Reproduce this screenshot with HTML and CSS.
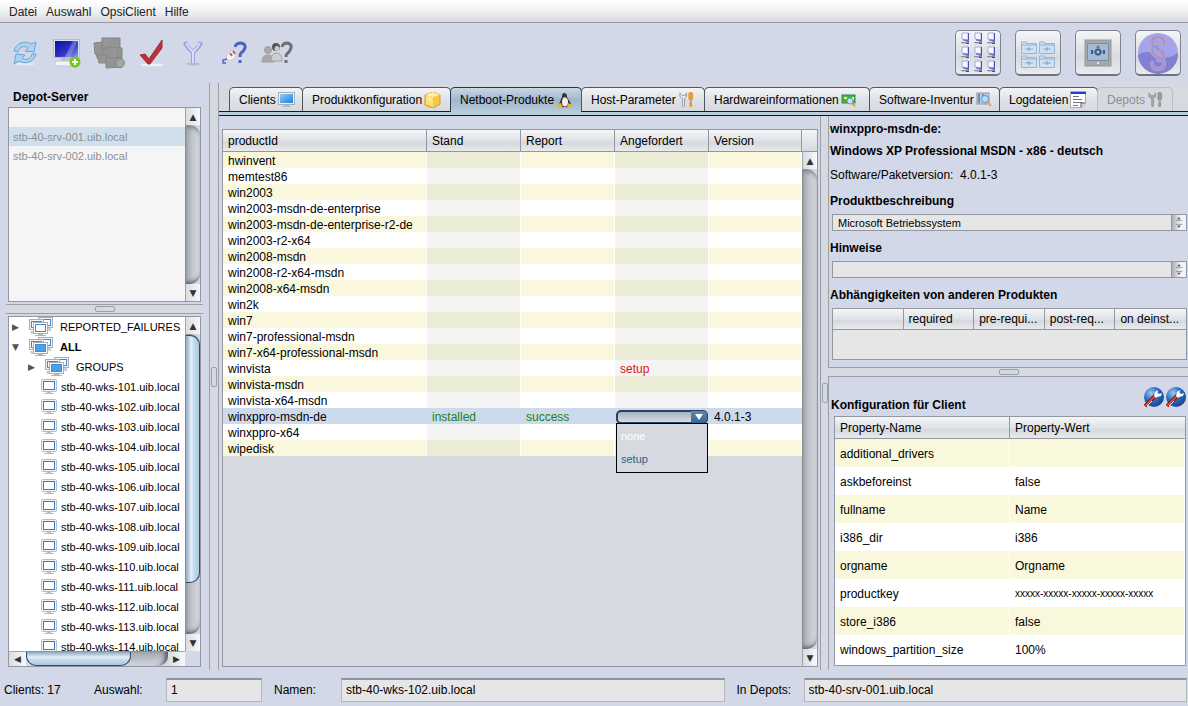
FILE: index.html
```html
<!DOCTYPE html>
<html lang="de">
<head>
  <meta charset="UTF-8">
  <meta name="viewport" content="width=device-width, initial-scale=1.0">
  <title>opsi config editor</title>
  <link rel="stylesheet" href="styles.css">
</head>
<body>

  <!-- shared icons -->
  <svg class="defs" width="0" height="0" aria-hidden="true">
    <defs>
      <linearGradient id="gBlue" x1="0" y1="0" x2="1" y2="1">
        <stop offset="0" stop-color="#8fd0fb"/><stop offset="1" stop-color="#1c7fe0"/>
      </linearGradient>
      <linearGradient id="gNavy" x1="0" y1="0" x2="1" y2="1">
        <stop offset="0" stop-color="#0a10a0"/><stop offset=".6" stop-color="#3038c8"/><stop offset="1" stop-color="#8f9cf0"/>
      </linearGradient>
      <radialGradient id="gBall" cx=".35" cy=".3" r=".8">
        <stop offset="0" stop-color="#9cc8f4"/><stop offset=".45" stop-color="#2f6fc0"/><stop offset="1" stop-color="#103c88"/>
      </radialGradient>
    </defs>
    <symbol id="pc" viewBox="0 0 16 16">
      <path d="M6 12h4v2h3v1H3v-1h3z" fill="#b8bcc2"/>
      <rect x=".5" y=".5" width="15" height="12" rx="1" fill="#f1f2f4" stroke="#b8bcc0"/>
      <rect x="2.500" y="2.500" width="11" height="8" fill="#fff" stroke="#2f7cc8"/>
    </symbol>
    <symbol id="group" viewBox="0 0 24 20">
      <rect x="9.500" y=".5" width="14" height="10" fill="#f2f4f6" stroke="#a9aeb4"/>
      <rect x="11.500" y="2.500" width="10" height="6" fill="#fff" stroke="#3c8ad4"/>
      <path d="M19 11h3v3h-3z" fill="#ccd0d4"/>
      <rect x=".5" y="2.500" width="14" height="10" fill="#f2f4f6" stroke="#a9aeb4"/>
      <rect x="2.500" y="4.500" width="10" height="6" fill="#fff" stroke="#3c8ad4"/>
      <path d="M1 14h4v3H2z" fill="#ccd0d4"/>
      <path d="M9 16h5v2h3v1H6v-1h3z" fill="#b0b5ba"/>
      <rect x="4.500" y="5.500" width="14" height="11" fill="#fff" stroke="#a9aeb4"/>
      <rect x="6.500" y="7.500" width="10" height="7" stroke="#3c8ad4"/>
    </symbol>
    <symbol id="minipc" viewBox="0 0 11 13">
      <path d="M2 1h6v7l-6-1z" fill="#f8f8ff" stroke="#a3a8e4"/>
      <path d="M8.500 1v7.500L3 8" fill="none" stroke="#4850c0"/>
      <path d="M5 10l4-1v1z" fill="#4850c0"/>
      <path d="M1 10.500h8" stroke="#8a8ca0"/><path d="M2 11.500h5" stroke="#e8c46a"/><path d="M6 11.500h3" stroke="#444c98"/>
    </symbol>
    <symbol id="folder" viewBox="0 0 16 13">
      <path d="M.5 12.500V1h5v1.500h10v10z" fill="#cfe0f1" stroke="#8db8e0"/>
      <path d="M.5 4h15M4 8h8M8 6v4" fill="none" stroke="#8fb0d4"/><circle cx="8" cy="8" r="1.500" fill="#8fb0d4"/>
    </symbol>
    <symbol id="tool" viewBox="0 0 22 22">
      <circle cx="11" cy="11" r="10" fill="url(#gBall)"/>
      <path d="M2 20L13 9" stroke="#5b1014" stroke-width="3.500"/><path d="M2 20L13 9" stroke="#f04038" stroke-width="2"/>
      <path d="M4 20l5-5" stroke="#e8eef4"/>
      <path d="M11 10l1-4 3-2-.5 3 2 1 2.500-1-1 3-4 1-1 1z" fill="#fff"/>
    </symbol>
    <symbol id="wrenches" viewBox="0 0 18 18">
      <path d="M2 2v4l3 2v8q1 2 2 0V8l2-2V2L7.500 5h-3z" fill="var(--a)" stroke="var(--b)"/>
      <rect x="11" y="1" width="5" height="9" rx="2" fill="var(--c)"/><path d="M13.500 10v3" stroke="var(--b)" stroke-width="2"/><rect x="12" y="12" width="3" height="5" rx="1" fill="var(--c)"/>
    </symbol>
    <symbol id="spin" viewBox="0 0 15 15">
      <path d="M4 5.500h7M4 9.500h7" stroke="#8d9299"/><path d="M5.500 4L7.500 2l2 2zM5.500 11l2 2 2-2z" fill="#4a4e55"/>
    </symbol>
  </svg>

  <nav class="menubar">
    <a href="#">Datei</a>
    <a href="#">Auswahl</a>
    <a href="#">OpsiClient</a>
    <a href="#">Hilfe</a>
  </nav>

  <div class="toolbar">
    <div class="tools">
      <button aria-label="Neu laden">
        <svg width="28" height="28" viewBox="0 0 28 28">
          <ellipse cx="14" cy="25" rx="10" ry="1.500" fill="#e6eaf3"/>
          <g fill="#a9d3f0" stroke="#6aa6d2"><path d="M3 12C5 4 14 1 20 5l5-2-2 10-9-1 3-3C13 6 8 8 7 13z"/><path d="M25 15c-2 8-11 11-17 7l-5 3 2-10 9 1-3 3c4 3 9 1 10-4z"/></g>
        </svg>
      </button>
      <button aria-label="Neuer Client">
        <svg width="28" height="30" viewBox="0 0 28 30">
          <rect x=".5" y="1.500" width="26" height="18" fill="#dde2f8" stroke="#b4bad8"/><rect x="2" y="3" width="23" height="16" fill="url(#gNavy)"/><path d="M20 3h5L17 19h-5z" fill="#fff" opacity=".25"/>
          <path d="M8 20h10v3H8z" fill="#bbc0c8"/><path d="M3 23h19l4 5H1z" fill="#f4f4f6" stroke="#c0c4cc"/>
          <circle cx="22" cy="24" r="5.500" fill="#78c420"/><path d="M22 21v6M19 24h6" stroke="#fff" stroke-width="2"/>
        </svg>
      </button>
      <button aria-label="Gruppe">
        <svg width="32" height="32" viewBox="0 0 32 32">
          <g fill="#949494" stroke="#858585"><path d="M1 6l9-1 1 11-1 5H4v-3l-2-1z"/><path d="M9 1h18v12H9z"/><path d="M12 10l17 1v12H12z"/><path d="M4 18h10v8H6z"/><path d="M13 21l15-1 1 10-16 1z"/></g>
          <circle cx="27" cy="26" r="4.500" fill="#a5a5a5" stroke="#848484"/><path d="M13 2v7M21 12v8" stroke="#a0a0a0"/>
        </svg>
      </button>
      <button aria-label="Speichern">
        <svg width="28" height="28" viewBox="0 0 28 28">
          <ellipse cx="15" cy="26" rx="12" ry="1.500" fill="#edf0f7"/>
          <path d="M3 16l5-1 4 5L25 1v8L13 25h-2z" fill="#bd3038" stroke="#993038"/>
        </svg>
      </button>
      <button aria-label="Filter">
        <svg width="20" height="26" viewBox="0 0 20 26">
          <ellipse cx="10" cy="24" rx="7" ry="1.500" fill="#b5badb"/>
          <path d="M2 2q2 6 8 10 6-4 8-10M10 12v11" fill="none" stroke="#9a9fe0" stroke-width="4"/><path d="M3 3q2 5 7 9 5-4 7-9M10 12v11" fill="none" stroke="#dcdefb" stroke-width="2"/>
        </svg>
      </button>
      <button aria-label="Auswahl definieren">
        <svg width="26" height="24" viewBox="0 0 26 24">
          <path d="M13 6q1-4 6-4 5 1 4 5-1 3-4 5-1 1-1 4M18 19v3" fill="none" stroke="#4f60bd" stroke-width="3"/>
          <path d="M4 18q0-7 7-9l4 3-3 6q-4 3-8 0z" fill="#f5f5f8" stroke="#c4c6d2"/><path d="M8 12l2 3M11 10l2 3" stroke="#c85450" stroke-width="2"/><path d="M5 18l-4 1v3h3" fill="none" stroke="#5666bc" stroke-width="1.500"/>
        </svg>
      </button>
      <button aria-label="Clients suchen">
        <svg width="32" height="24" viewBox="0 0 32 24">
          <g fill="#a9a9a9" stroke="#a0a0a0"><circle cx="7" cy="9" r="3.500"/><path d="M1 21q0-7 6-7t6 7z"/><path d="M10 20q0-8 5-8 6 0 6 8z" fill="#cfcfcf"/></g>
          <circle cx="15" cy="6" r="4" fill="#545454"/><circle cx="16" cy="7.500" r="2.500" fill="#ccc"/>
          <path d="M21 6q1-4 5-4 5 1 4 5-1 3-3 5-2 1-2 4M25 19v3" fill="none" stroke="#707070" stroke-width="3"/>
        </svg>
      </button>
    </div>

    <div class="modes">
      <button aria-label="Clients">
        <svg width="38" height="42" viewBox="0 0 38 42">
          <use href="#minipc" x="1" y="0" width="11" height="13"/><use href="#minipc" x="14" y="0" width="11" height="13"/><use href="#minipc" x="27" y="0" width="11" height="13"/>
          <use href="#minipc" x="1" y="14" width="11" height="13"/><use href="#minipc" x="14" y="14" width="11" height="13"/><use href="#minipc" x="27" y="14" width="11" height="13"/>
          <use href="#minipc" x="1" y="28" width="11" height="13"/><use href="#minipc" x="14" y="28" width="11" height="13"/><use href="#minipc" x="27" y="28" width="11" height="13"/>
        </svg>
      </button>
      <button aria-label="Depots">
        <svg class="low" width="36" height="28" viewBox="0 0 36 28">
          <use href="#folder" x="1" y="0" width="16" height="13"/><use href="#folder" x="19" y="0" width="16" height="13"/>
          <use href="#folder" x="1" y="14" width="16" height="13"/><use href="#folder" x="19" y="14" width="16" height="13"/>
        </svg>
      </button>
      <button aria-label="Server">
        <svg width="28" height="28" viewBox="0 0 28 28">
          <rect x="1" y="1" width="26" height="26" fill="#a5a7aa" stroke="#94979b"/><rect x="3.500" y="4.500" width="21" height="17" fill="#a3bbd3" stroke="#7e8fa2"/>
          <path d="M7 13h14M14 7v10" stroke="#6683a6"/><circle cx="14" cy="13" r="3.500" fill="#34618f"/><circle cx="14" cy="13" r="1.500" fill="#a7cbea"/>
          <path d="M8 11v4M20 11v4" stroke="#4e5688" stroke-width="2"/><circle cx="14" cy="8" r="1.500" fill="#a65c70"/><path d="M13 24h2" stroke="#e4e4e4" stroke-width="2"/>
        </svg>
      </button>
      <button aria-label="Lizenzen">
        <svg width="42" height="42" viewBox="0 0 42 42">
          <circle cx="21" cy="21" r="20" fill="#a3a4ec"/><path d="M1 23q9-6 17 0 11 6 23-2a20 20 0 0 1-40 2z" fill="#8080d4"/>
          <g fill="none" stroke-linecap="round">
            <path id="para" d="M27 11q0-6-6-6t-6 5q0 4 6 7 6 3 6 7t-6 4M15 31q0 6 6 6t6-5q0-4-6-7-6-3-6-7t6-4" stroke="#cf9fb0" stroke-width="4"/>
            <path d="M27 11q0-6-6-6t-6 5q0 4 6 7 6 3 6 7t-6 4M15 31q0 6 6 6t6-5q0-4-6-7-6-3-6-7t6-4" stroke="#9494e2" stroke-width="2"/>
          </g>
        </svg>
      </button>
    </div>
  </div>

  <div class="main">
    <aside class="sidebar">
      <h2>Depot-Server</h2>
      <div class="pane depots">
        <ul class="depot-list">
          <li class="selected">stb-40-srv-001.uib.local</li>
          <li>stb-40-srv-002.uib.local</li>
        </ul>
        <div class="scroll"><button aria-label="Hoch">▲</button><div class="track"></div><button aria-label="Runter">▼</button></div>
      </div>
      <div class="splitter"></div>
      <div class="pane tree-pane">
        <ul class="tree" id="tree">
          <li><i>▶</i><svg class="empty" width="24" height="20"><use href="#group"/></svg>REPORTED_FAILURES</li>
          <li class="all"><i>▼</i><svg width="24" height="20"><use href="#group"/></svg>ALL</li>
          <li class="sub"><i>▶</i><svg width="24" height="20"><use href="#group"/></svg>GROUPS</li>
        </ul>
        <div class="scroll"><button aria-label="Hoch">▲</button><div class="track"><div class="thumb"></div></div><button aria-label="Runter">▼</button></div>
        <div class="scroll horizontal"><button aria-label="Links">◀</button><div class="track"><div class="thumb"></div></div><button aria-label="Rechts">▶</button></div>
      </div>
    </aside>

    <div class="divider"></div>

    <section class="content">
      <div class="tabs">
        <button>Clients<svg width="17" height="16" viewBox="0 0 17 16"><path d="M6 12h5v2h2v1H4v-1h2z" fill="#b4bac0"/><rect x=".5" y=".5" width="16" height="12" fill="#edf0f3" stroke="#a8b0b8"/><rect x="2" y="2" width="13" height="9" fill="url(#gBlue)"/></svg></button>
        <button>Produktkonfiguration<svg width="17" height="16" viewBox="0 0 17 16"><path d="M1 3l8-3 7 3v9l-7 4-8-3z" fill="#f5c84c" stroke="#d29a2c"/><path d="M1 3l8-3 7 3-7 2z" fill="#fff0a0"/><path d="M9 5v10l-7-3V4z" fill="#ffdf70"/><path d="M5 2v5l3 1" stroke="#fff6cc" fill="none"/></svg></button>
        <button class="active">Netboot-Produkte<svg width="17" height="17" viewBox="0 0 17 17"><path d="M8 1q3 0 3 4l4 7q-1 4-6 3-5 1-6-3l3-7q0-4 2-4z" fill="#303438"/><ellipse cx="9" cy="10" rx="3" ry="4.500" fill="#f4f4ec"/><path d="M7 5h3l-1 2z" fill="#eeb020"/><path d="M1 12l4-1 2 5H2zM11 15l1-4 4 2-2 3z" fill="#e8b430"/></svg></button>
        <button>Host-Parameter<svg class="wrench" width="17" height="17"><use href="#wrenches"/></svg></button>
        <button>Hardwareinformationen<svg width="17" height="14" viewBox="0 0 17 14"><rect x="1" y="2" width="13" height="8" fill="#42b438" stroke="#2d8c4c"/><path d="M3 4h3v2H3zM11 4h2v3h-2z" fill="#eef4a0"/><circle cx="9" cy="8" r="3" fill="#c2e2f4" stroke="#5b9ac4"/><path d="M11 10l3 3" stroke="#dd9948" stroke-width="2"/></svg></button>
        <button>Software-Inventur<svg width="17" height="16" viewBox="0 0 17 16"><rect x="1" y="1" width="12" height="11" fill="#c2ccd8" stroke="#8b98a8"/><path d="M3 2v9M7 2v3" stroke="#738eab" stroke-width="2"/><circle cx="9" cy="7" r="3.500" fill="#b8dcf8" stroke="#5d98cc"/><path d="M12 10l3 4" stroke="#e5a648" stroke-width="2"/></svg></button>
        <button>Logdateien<svg width="17" height="18" viewBox="0 0 17 18"><path d="M.5.5h15v12l-4 4H.5z" fill="#fff" stroke="#a8aaae"/><path d="M1 2h15" stroke="#1d42d2" stroke-width="2"/><path d="M3 5.500h6M3 8.500h9M3 11.500h9M3 14.500h5" stroke="#777"/><path d="M15 12h-4v4" fill="#ddd" stroke="#555"/></svg></button>
        <button disabled>Depots<svg class="wrench" width="17" height="17"><use href="#wrenches"/></svg></button>
      </div>
      <div class="tab-line"></div>

      <div class="work">
        <div class="products">
          <div class="pane product-pane">
            <table class="grid product-table">
              <thead>
                <tr><th>productId</th><th>Stand</th><th>Report</th><th>Angefordert</th><th>Version</th></tr>
              </thead>
              <tbody id="products"></tbody>
            </table>
            <div class="scroll-side">
              <div class="corner"></div>
              <div class="scroll"><button aria-label="Hoch">▲</button><div class="track"></div><button aria-label="Runter">▼</button></div>
            </div>
          </div>
        </div>

        <div class="divider"></div>

        <div class="details">
          <h3>winxppro-msdn-de:</h3>
          <h4>Windows XP Professional MSDN - x86 - deutsch</h4>
          <p>Software/Paketversion:&nbsp; 4.0.1-3</p>
          <label for="description">Produktbeschreibung</label>
          <div class="field"><input id="description" type="text" value="Microsoft Betriebssystem" readonly><svg class="spin" width="15" height="15"><use href="#spin"/></svg></div>
          <label for="hints">Hinweise</label>
          <div class="field"><input id="hints" type="text" readonly><svg class="spin" width="15" height="15"><use href="#spin"/></svg></div>
          <h5>Abhängigkeiten von anderen Produkten</h5>
          <div class="depends">
            <table class="grid">
              <thead><tr><th></th><th>required</th><th>pre-requi...</th><th>post-req...</th><th>on deinst...</th></tr></thead>
            </table>
          </div>
          <div class="splitter"></div>
          <div class="config-head">
            <h5>Konfiguration für Client</h5>
            <button aria-label="Zurücksetzen"><svg width="22" height="22"><use href="#tool"/></svg></button>
            <button aria-label="Löschen"><svg width="22" height="22"><use href="#tool"/></svg></button>
          </div>
          <div class="config">
            <table class="grid config-table">
              <thead><tr><th>Property-Name</th><th>Property-Wert</th></tr></thead>
              <tbody>
                <tr><td>additional_drivers</td><td></td></tr>
                <tr><td>askbeforeinst</td><td>false</td></tr>
                <tr><td>fullname</td><td>Name</td></tr>
                <tr><td>i386_dir</td><td>i386</td></tr>
                <tr><td>orgname</td><td>Orgname</td></tr>
                <tr><td>productkey</td><td class="key">xxxxx-xxxxx-xxxxx-xxxxx-xxxxx</td></tr>
                <tr><td>store_i386</td><td>false</td></tr>
                <tr><td>windows_partition_size</td><td>100%</td></tr>
              </tbody>
            </table>
          </div>
        </div>
      </div>
    </section>
  </div>

  <footer class="status">
    <span>Clients: 17</span>
    <label for="selection">Auswahl:</label>
    <input id="selection" type="text" value="1" readonly>
    <label for="names">Namen:</label>
    <input id="names" type="text" value="stb-40-wks-102.uib.local" readonly>
    <label for="indepots">In Depots:</label>
    <input id="indepots" type="text" value="stb-40-srv-001.uib.local" readonly>
  </footer>

  <script>
    const products = [
      'hwinvent', 'memtest86', 'win2003', 'win2003-msdn-de-enterprise',
      'win2003-msdn-de-enterprise-r2-de', 'win2003-r2-x64', 'win2008-msdn',
      'win2008-r2-x64-msdn', 'win2008-x64-msdn', 'win2k', 'win7',
      'win7-professional-msdn', 'win7-x64-professional-msdn', 'winvista',
      'winvista-msdn', 'winvista-x64-msdn', 'winxppro-msdn-de',
      'winxppro-x64', 'wipedisk'
    ];

    const state = {
      'winvista': { request: '<span class="request">setup</span>' },
      'winxppro-msdn-de': {
        stand: 'installed',
        report: 'success',
        version: '4.0.1-3',
        request: `<div class="combo">
          <select aria-label="Angefordert"><option></option><option>none</option><option>setup</option></select>
          <span class="arrow"></span>
          <ul class="popup"><li class="current">none</li><li>setup</li></ul>
        </div>`
      }
    };

    const body = document.getElementById('products');
    products.forEach(id => {
      const s = state[id] || {};
      const row = document.createElement('tr');
      if (s.stand) row.classList.add('selected');
      row.innerHTML = `<td>${id}</td><td class="ok">${s.stand || ''}</td>` +
        `<td class="ok">${s.report || ''}</td><td>${s.request || ''}</td><td>${s.version || ''}</td>`;
      body.appendChild(row);
    });

    const tree = document.getElementById('tree');
    for (let n = 101; n <= 114; n++) {
      const item = document.createElement('li');
      item.classList.add('client');
      item.innerHTML = `<svg width="16" height="16"><use href="#pc"/></svg>stb-40-wks-${n}.uib.local`;
      tree.appendChild(item);
    }
  </script>

</body>
</html>
```
FILE: styles.css
```css
* {
  box-sizing: border-box;
}

body {
  margin: 0;
  height: 100vh;
  display: flex;
  flex-direction: column;
  overflow: hidden;
  font-family: "Liberation Sans", Arial, sans-serif;
  font-size: 12px;
  color: #000;
  background: #d2d8e8;
}

h2, h3, h4, h5, p, ul {
  margin: 0;
  padding: 0;
  font-size: 12px;
  list-style: none;
}

button, input, select {
  font: inherit;
  color: inherit;
  margin: 0;
  padding: 0;
  border: none;
  background: none;
}

.defs {
  position: absolute;
}

/* Menu */
.menubar {
  height: 23px;
  display: flex;
  align-items: center;
  gap: 9px;
  padding: 2px 9px 0;
  background: linear-gradient(#fff, #f0f1f2 50%, #d6d9dd);
  border-bottom: 1px solid #9297a1;
}

.menubar a {
  color: #222;
  text-decoration: none;
}

/* Toolbar */
.toolbar {
  height: 60px;
  display: flex;
  justify-content: space-between;
  align-items: center;
  padding: 0 7px 0 4px;
}

.tools {
  display: flex;
}

.tools button {
  width: 42px;
  height: 42px;
  display: flex;
  align-items: center;
  justify-content: center;
}

.modes {
  display: flex;
  gap: 14px;
}

.modes button {
  width: 46px;
  height: 46px;
  display: flex;
  align-items: center;
  justify-content: center;
  border: 1px solid #80848c;
  border-bottom: 2px solid #6f737a;
  border-radius: 5px;
  background: linear-gradient(#f4f5f7, #d8dbe1 60%, #e8eaee);
}

.modes svg {
  flex: none;
}

.modes .low {
  margin-top: 5px;
}

/* Main */
.main {
  flex: 1;
  min-height: 0;
  display: flex;
}

.sidebar {
  width: 209px;
  display: flex;
  flex-direction: column;
  padding: 2px 8px 3px 8px;
}

.sidebar h2 {
  height: 22px;
  line-height: 24px;
  padding-left: 5px;
}

.pane {
  border: 1px solid #9297a1;
  background: #fff;
}

.depots {
  height: 195px;
  display: flex;
  background: #f5f5f5;
}

.depot-list {
  flex: 1;
  padding-top: 19px;
  font-size: 11px;
  color: #8e8f91;
}

.depot-list li {
  height: 19px;
  line-height: 20px;
  padding-left: 4px;
}

.depot-list .selected {
  background: #cfe0ec;
}

.splitter {
  height: 10px;
  margin: 2px -2px;
  display: flex;
  align-items: center;
  justify-content: center;
  border-top: 1px solid #9a9fac;
  border-bottom: 1px solid #9a9fac;
  background: #d6d9df;
}

.splitter::after {
  content: "";
  width: 18px;
  height: 4px;
  border: 1px solid #9a9fac;
  border-radius: 2px;
  background: #d6d9df;
}

.divider {
  width: 9px;
  flex: none;
  display: flex;
  align-items: center;
  justify-content: center;
  border-left: 1px solid #9a9fac;
  border-right: 1px solid #9a9fac;
  background: #d6d9df;
}

.main > .divider {
  width: 10px;
}

.divider::after {
  content: "";
  width: 4px;
  height: 18px;
  border: 1px solid #9a9fac;
  border-radius: 2px;
  background: #d6d9df;
}

.tree-pane {
  flex: 1;
  min-height: 0;
  display: grid;
  grid-template-columns: 1fr 15px;
  grid-template-rows: 1fr 15px;
  background: #d2d8e8;
}

.tree {
  min-height: 0;
  overflow: hidden;
  background: #fff;
  font-size: 11px;
}

.tree li {
  height: 20px;
  display: flex;
  align-items: center;
  white-space: nowrap;
}

.tree i {
  width: 20px;
  padding-left: 3px;
  font: 9px "DejaVu Sans", sans-serif;
  color: #555;
}

.tree svg {
  margin-right: 7px;
  fill: #4ca0ea;
}

.tree .empty {
  fill: #fff;
}

.tree .all {
  font-weight: bold;
}

.tree .sub {
  padding-left: 16px;
}

.tree .client {
  padding-left: 32px;
}

.tree .client svg {
  margin-right: 4px;
}

/* Scrollbars */
.scroll {
  width: 15px;
  min-height: 0;
  display: flex;
  flex-direction: column;
  background: #d6d9df;
}

.scroll button {
  height: 17px;
  flex: none;
  font: 9px "DejaVu Sans", sans-serif;
  color: #333;
  border-left: 1px solid #a0a5ad;
  background: linear-gradient(90deg, #d9dce1, #f8f8f9);
}

.scroll .track {
  flex: 1;
  min-height: 0;
  border-left: 1px solid #888d96;
  border-top: 1px solid #8d929a;
  border-radius: 0 10px 10px 0;
  background: linear-gradient(90deg, #a3a7af, #c4c8cf 50%, #d5d8dd);
  box-shadow: inset 0 4px 4px -2px #7f848c, inset 0 -5px 4px -3px #555a62;
}

.scroll .thumb {
  height: 83%;
  border: 1px solid #304a66;
  border-left: none;
  border-radius: 0 10px 10px 0;
  background: linear-gradient(90deg, #8fa9c0, #e4eff8 40%, #c5dced 60%, #a7c9df);
}

.scroll.horizontal {
  width: auto;
  flex-direction: row;
}

.horizontal button {
  width: 17px;
  height: 15px;
  border: none;
  border-top: 1px solid #a0a5ad;
}

.horizontal .track {
  border-left: none;
  border-radius: 0 0 10px 10px;
  background: linear-gradient(#a3a7af, #d5d8dd);
  box-shadow: inset -6px 0 4px -3px #555a62;
}

.horizontal .thumb {
  width: 74%;
  height: 100%;
  border: 1px solid #304a66;
  border-top: none;
  border-radius: 0 0 10px 10px;
  background: linear-gradient(#8fa9c0, #e4eff8 40%, #c5dced 60%, #a7c9df);
}

/* Tabs */
.content {
  flex: 1;
  min-width: 0;
  display: flex;
  flex-direction: column;
}

.tabs {
  height: 29px;
  display: grid;
  grid-template-columns: 73px 148px 131px 123px 165px 130px 98px 75px;
  padding: 4px 0 0 10px;
  background: #d6d9df;
  border-bottom: 1px solid #10192c;
}

.tabs button {
  height: 24px;
  display: flex;
  align-items: center;
  padding-left: 9px;
  white-space: nowrap;
  border: 1px solid #50555f;
  border-bottom: none;
  border-radius: 5px 5px 0 0;
  margin-right: -1px;
  background: linear-gradient(#f3f4f6, #dfe2e7 50%, #d6d9df);
}

.tabs button.active {
  height: 25px;
  border-color: #24364e;
  background: linear-gradient(#cbd8e4, #a1b6ca 50%, #b7cbdc);
}

.tabs button:disabled {
  color: #8e8f91;
  border-color: #b8bcc4;
  background: #d6d9df;
}

.tabs svg {
  flex: none;
  margin-left: 2px;
}

.wrench {
  --a: #f0f1f2;
  --b: #94989c;
  --c: #ef9738;
}

.tabs button:disabled .wrench {
  --a: #a5a7aa;
  --b: #999;
  --c: #999;
}

.tab-line {
  height: 4px;
  background: #b9cddd;
  border-bottom: 1px solid #10192c;
}

.work {
  flex: 1;
  min-height: 0;
  display: flex;
}

.products {
  flex: 1;
  min-width: 0;
  display: flex;
  padding: 13px 2px 3px 3px;
}

.product-pane {
  flex: 1;
  min-width: 0;
  display: flex;
  align-items: flex-start;
  background: #d6d9df;
}

.scroll-side {
  align-self: stretch;
  display: flex;
  flex-direction: column;
}

.scroll-side .corner {
  height: 22px;
  background: linear-gradient(#f4f5f6, #d5d8dd);
  border-bottom: 1px solid #9297a1;
}

.scroll-side .scroll {
  flex: 1;
}

/* Tables */
.grid {
  flex: 1;
  width: 100%;
  min-width: 0;
  table-layout: fixed;
  border-collapse: separate;
  border-spacing: 0;
}

.grid th {
  height: 21px;
  padding: 0 5px;
  text-align: left;
  font-weight: normal;
  white-space: nowrap;
  border-right: 1px solid #9297a1;
  border-bottom: 1px solid #9297a1;
  background: linear-gradient(#f4f5f6, #dfe2e6 50%, #d5d8dd 60%, #e8eaed);
}

.grid td {
  height: 16px;
  padding: 0 5px;
  line-height: 14px;
  white-space: nowrap;
  border-right: 1px solid #fff;
  background: #fff;
}

.grid tr:nth-child(odd) td {
  background: #f9f8dc;
}

.product-table th {
  height: 22px;
}

.product-table td {
  padding-top: 1px;
}

.product-table th:not(:first-child) {
  width: 94px;
}

.product-table th:last-child:last-child {
  width: 93px;
}

.product-table td:nth-child(2),
.product-table td:nth-child(4) {
  background: #f4f4f4;
}

.product-table tr:nth-child(odd) td:nth-child(2),
.product-table tr:nth-child(odd) td:nth-child(4) {
  background: #ecebd6;
}

.product-table tr.selected td:nth-child(n) {
  background: #cddaec;
  border-color: #cddaec;
}

.grid .ok {
  color: #1c8024;
}

.request {
  color: #e01020;
}

.combo {
  position: relative;
  height: 14px;
  margin: 0 -5px 0 -4px;
}

.combo select {
  display: block;
  width: 100%;
  height: 14px;
  appearance: none;
  border: 2px solid #28425e;
  border-radius: 5px;
  background: linear-gradient(#a6b1bf, #d9dde3);
}

/* drop-down button and list lie over the cell */
.arrow {
  position: absolute;
  top: 1px;
  right: 1px;
  width: 16px;
  height: 12px;
  border-radius: 0 4px 4px 0;
  background: linear-gradient(#6289ae, #386590);
  pointer-events: none;
}

.arrow::after {
  content: "";
  display: block;
  margin: 3px 4px;
  border: 4px solid transparent;
  border-top: 6px solid #fff;
  border-bottom: none;
}

.popup {
  position: absolute;
  top: 13px;
  left: 0;
  width: 100%;
  height: 50px;
  border: 1px solid #000;
  background: #d6d9df;
  z-index: 2;
  font-size: 11px;
}

.popup li {
  height: 23px;
  line-height: 25px;
  padding-left: 4px;
  color: #2f6188;
}

.popup .current {
  color: #fff;
}

/* Details */
.details {
  width: 359px;
  flex: none;
  display: flex;
  flex-direction: column;
  padding: 1px 1px 4px 1px;
}

.details h3 {
  line-height: 24px;
}

.details h4 {
  line-height: 20px;
}

.details p {
  line-height: 28px;
}

.details label, .details h5 {
  font-weight: bold;
  line-height: 24px;
}

.field {
  height: 17px;
  display: flex;
  margin: 1px 0 5px 2px;
  border: 1px solid #9297a1;
  background: #e6e6e6;
}

.field input {
  flex: 1;
  min-width: 0;
  padding-left: 5px;
  font-size: 11px;
}

.spin {
  border-left: 1px solid #9297a1;
  background: linear-gradient(90deg, #aaafb6, #f2f3f4 60%);
}

.depends {
  height: 52px;
  margin: 1px 0 5px 2px;
  border: 1px solid #9297a1;
  background: #e6e6e6;
}

.depends th:last-child, .config-table th:last-child {
  border-right: none;
}

.details .splitter {
  margin-bottom: 0;
}

.config-head {
  height: 39px;
  display: flex;
  align-items: center;
  padding-left: 1px;
}

.config-head h5 {
  flex: 1;
  padding-top: 16px;
}

.config-head button {
  height: 22px;
}

.config-head svg {
  display: block;
}

.config {
  flex: 1;
  margin: 0 1px 0 4px;
  border: 1px solid #9297a1;
  background: #fff;
}

.config-table th {
  height: 22px;
}

.config-table td {
  height: 28px;
  padding-top: 1px;
}

.config-table .key {
  font-size: 10px;
}

/* Status bar */
.status {
  height: 36px;
  display: grid;
  grid-template-columns: 90px 72px 96px 79px 1fr 79px 1fr;
  align-items: center;
  padding: 3px 1px 0 4px;
}

.status label {
  padding-left: 12px;
}

.status label:nth-of-type(1) {
  padding-left: 0;
}

.status input {
  height: 24px;
  min-width: 0;
  padding-left: 4px;
  border: 1px solid #b4b6ba;
  border-top: 2px solid #8f939b;
  background: #e6e6e6;
}
```
